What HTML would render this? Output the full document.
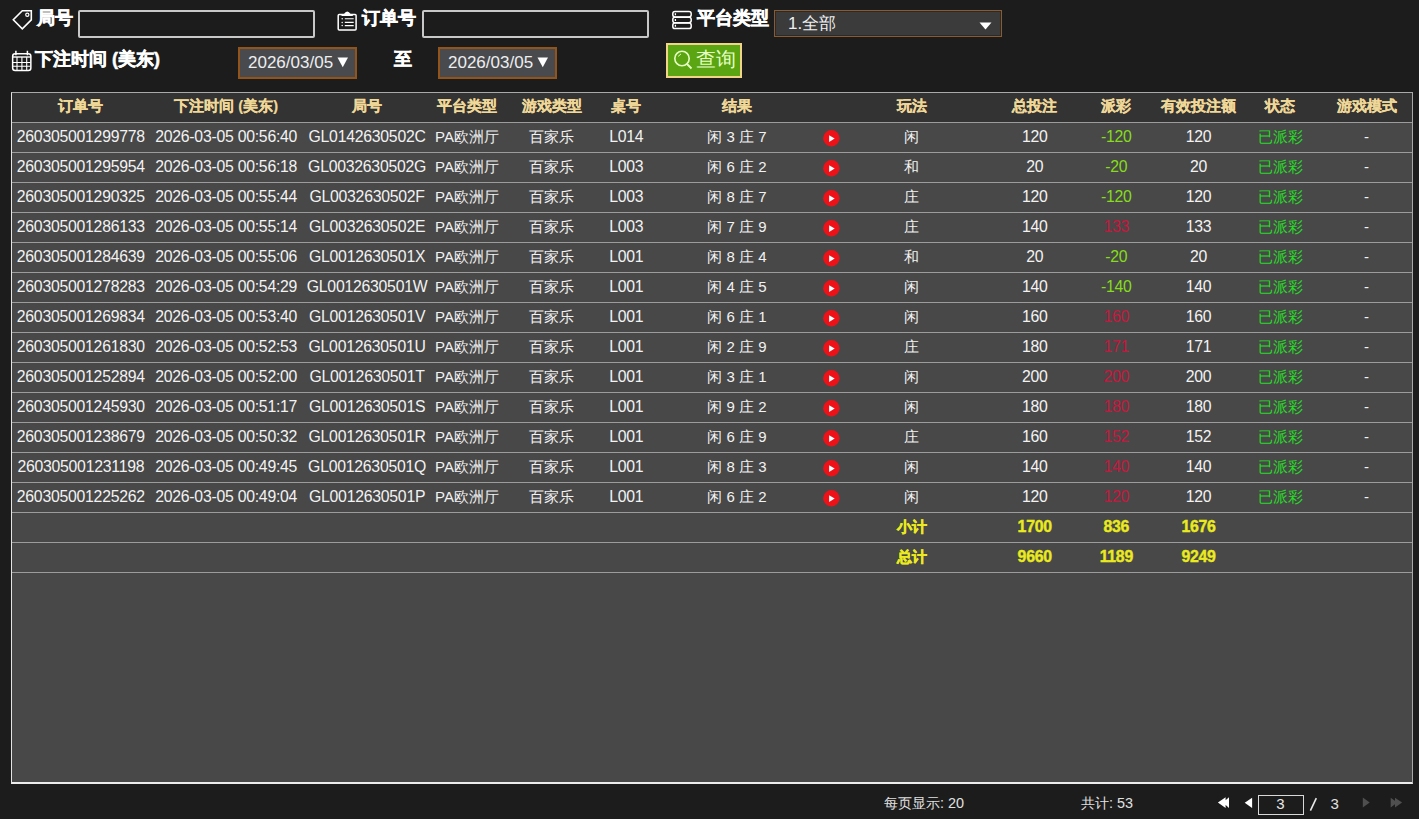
<!DOCTYPE html>
<html><head><meta charset="utf-8">
<style>
html,body{margin:0;padding:0}
body{width:1419px;height:819px;background:#1c1c1c;position:relative;overflow:hidden;font-family:"Liberation Sans",sans-serif;color:#fff}
.abs{position:absolute}
.lbl{position:absolute;font-weight:bold;font-size:18px;line-height:20px;color:#fff;white-space:nowrap;-webkit-text-stroke:0.5px #fff}
.inp{position:absolute;box-sizing:border-box;border:2px solid #c8c8c8;border-radius:2px;background:#1c1c1c}
.sel{position:absolute;box-sizing:border-box;border:1px solid #8a5a30;background:#3b3b3b;box-shadow:inset 0 0 0 1px #2a2a2a}
.date{position:absolute;box-sizing:border-box;border:2px solid #93541c;background:#484a4e;color:#eee;font-size:17px;line-height:27px;white-space:nowrap}
.btn{position:absolute;box-sizing:border-box;border:2px solid #f2d488;background:#5aa511;color:#e6ffc4;font-size:20px;line-height:30px;white-space:nowrap}
#tbl{position:absolute;left:11px;top:92px;width:1402px;height:692px;box-sizing:border-box;background:#484848;border-left:1px solid #e4e4e4;border-bottom:2px solid #ececec;border-top:1px solid #aaa;border-right:1px solid #a8a8a8}
.row{position:absolute;left:12px;width:1400px;height:30px;border-bottom:1px solid #9c9c9c;box-sizing:border-box}
#tbl .row{}
.row i{position:absolute;font-style:normal;width:200px;text-align:center;top:-1px;line-height:29px;font-size:15px;color:#f2f2f2;white-space:nowrap}
.row i.n{font-size:15.8px;letter-spacing:-0.25px;top:-1.5px}
.hd{background:#333;}
.hd i{color:#efd898;font-weight:bold;font-size:14.5px;top:-1.5px;-webkit-text-stroke:0.2px #efd898}
.play{position:absolute;top:7px;width:17px;height:17px;display:block}
.play svg{display:block}
.row i.neg{color:#86dc1a}
.row i.pos{color:#c8163e}
.row i.st{color:#26dc26}
.sum i{color:#eaea1e;font-weight:bold;-webkit-text-stroke:0.4px #eaea1e}
.pg{position:absolute;font-size:14.4px;color:#e0e0e0;white-space:nowrap;line-height:16px}
</style></head><body>
<!-- row 1 -->
<svg class="abs" style="left:11px;top:9px" width="22" height="22" viewBox="0 0 22 22"><path d="M11.3 1.8 H20.3 V10.8 L11.3 19.8 L2.3 10.8 Z" fill="none" stroke="#fff" stroke-width="1.6" stroke-linejoin="miter"/><circle cx="16.3" cy="5.8" r="1.6" fill="none" stroke="#fff" stroke-width="1.2"/></svg>
<div class="lbl" style="left:37px;top:8px">局号</div>
<div class="inp" style="left:78px;top:10px;width:237px;height:28px"></div>
<svg class="abs" style="left:332px;top:6px" width="30" height="28" viewBox="0 0 30 28"><rect x="6.2" y="8.4" width="17.9" height="15.6" rx="1" fill="none" stroke="#fff" stroke-width="1.5"/><path d="M9.5 9.2 H20.8" stroke="#fff" stroke-width="1.6"/><path d="M11.8 8.3 Q15.2 2.6 18.8 8.3 Z" fill="#fff"/><path d="M12.8 12.8 H21.7 M12.8 16.4 H21.7 M12.8 19.6 H21.7" stroke="#fff" stroke-width="1.1"/><circle cx="10.2" cy="12.8" r=".75" fill="#fff"/><circle cx="10.2" cy="16.4" r=".75" fill="#fff"/><circle cx="10.2" cy="19.6" r=".75" fill="#fff"/></svg>
<div class="lbl" style="left:362px;top:8px">订单号</div>
<div class="inp" style="left:422px;top:10px;width:227px;height:28px"></div>
<svg class="abs" style="left:671px;top:10px" width="22" height="21" viewBox="0 0 22 21"><rect x="1.8" y="1.5" width="18.4" height="5.5" rx="2.2" fill="none" stroke="#fff" stroke-width="1.5"/><rect x="1.8" y="7.3" width="18.4" height="5.5" rx="2.2" fill="none" stroke="#fff" stroke-width="1.5"/><rect x="1.8" y="13.1" width="18.4" height="5.5" rx="2.2" fill="none" stroke="#fff" stroke-width="1.5"/><path d="M4.4 3.2 V5.2 M4.4 9 V11 M4.4 14.8 V16.8" stroke="#fff" stroke-width="1.3"/></svg>
<div class="lbl" style="left:697px;top:8px">平台类型</div>
<div class="sel" style="left:774px;top:10px;width:228px;height:27px"><span class="abs" style="left:13px;top:3px;font-size:17px;line-height:20px;color:#f0f0f0">1.全部</span><svg class="abs" style="left:204px;top:11px" width="13" height="8" viewBox="0 0 13 8"><path d="M0.5 0.5 H12.5 L6.5 7.5 Z" fill="#fff"/></svg></div>
<!-- row 2 -->
<svg class="abs" style="left:6px;top:46px" width="30" height="30" viewBox="0 0 30 30"><rect x="6.65" y="7.75" width="18.2" height="16.8" rx="2.5" fill="none" stroke="#fff" stroke-width="1.5"/><path d="M9.9 4.8 V9.2 M21.4 4.8 V9.2" stroke="#fff" stroke-width="1.5"/><path d="M6.6 11 H24.9" stroke="#fff" stroke-width="1.4"/><path d="M7 16.5 H24.4 M7 20.3 H24.4 M11 11 V24 M15.9 11 V24 M20.7 11 V24" stroke="#fff" stroke-width="1.1"/></svg>
<div class="lbl" style="left:35px;top:49px">下注时间 (美东)</div>
<div class="date" style="left:238px;top:47px;width:119px;height:32px;padding-left:8px">2026/03/05<svg class="abs" style="left:97px;top:8px" width="12" height="11" viewBox="0 0 12 11"><path d="M0.5 0.5 H11 L5.75 10.2 Z" fill="#fff"/></svg></div>
<div class="lbl" style="left:394px;top:49px">至</div>
<div class="date" style="left:438px;top:47px;width:119px;height:32px;padding-left:8px">2026/03/05<svg class="abs" style="left:97px;top:8px" width="12" height="11" viewBox="0 0 12 11"><path d="M0.5 0.5 H11 L5.75 10.2 Z" fill="#fff"/></svg></div>
<div class="btn" style="left:666px;top:43px;width:76px;height:35px"><svg class="abs" style="left:5px;top:4px" width="20" height="22" viewBox="0 0 20 22"><circle cx="9" cy="9.5" r="7.2" fill="none" stroke="#e6ffc4" stroke-width="1.6"/><path d="M14 15 L18.5 19.5" stroke="#e6ffc4" stroke-width="1.8"/><path d="M5.5 7.5 A4.5 4.5 0 0 1 8 5" fill="none" stroke="#e6ffc4" stroke-width="1"/></svg><span class="abs" style="left:28px;top:-1px">查询</span></div>
<!-- table -->
<div id="tbl"></div>
<div class="row hd" style="top:93px"><i style="left:-31.2px">订单号</i><i style="left:114.2px">下注时间 (美东)</i><i style="left:255.1px">局号</i><i style="left:355.0px">平台类型</i><i style="left:439.8px">游戏类型</i><i style="left:514.3px">桌号</i><i style="left:625.0px">结果</i><i style="left:799.7px">玩法</i><i style="left:922.7px">总投注</i><i style="left:1004.3px">派彩</i><i style="left:1086.5px">有效投注额</i><i style="left:1168.0px">状态</i><i style="left:1254.5px">游戏模式</i></div>
<div class="row" style="top:123px"><i class="n" style="left:-31.2px">260305001299778</i><i class="n" style="left:114.2px">2026-03-05 00:56:40</i><i class="n" style="left:255.1px">GL0142630502C</i><i class="" style="left:355.0px">PA欧洲厅</i><i class="" style="left:439.8px">百家乐</i><i class="n" style="left:514.3px">L014</i><i class="" style="left:625.0px">闲 3 庄 7</i><b class="play" style="left:810.5px"><svg width="17" height="17" viewBox="0 0 17 17"><circle cx="8.4" cy="8.3" r="8.2" fill="#ee1218"/><path d="M6.1 5.2 L11.7 8.6 L6.1 12.1 Z" fill="#fff"/></svg></b><i class="" style="left:799.7px">闲</i><i class="n" style="left:922.7px">120</i><i class="neg n" style="left:1004.3px">-120</i><i class="n" style="left:1086.5px">120</i><i class="st" style="left:1168.0px">已派彩</i><i class="" style="left:1254.5px">-</i></div>
<div class="row" style="top:153px"><i class="n" style="left:-31.2px">260305001295954</i><i class="n" style="left:114.2px">2026-03-05 00:56:18</i><i class="n" style="left:255.1px">GL0032630502G</i><i class="" style="left:355.0px">PA欧洲厅</i><i class="" style="left:439.8px">百家乐</i><i class="n" style="left:514.3px">L003</i><i class="" style="left:625.0px">闲 6 庄 2</i><b class="play" style="left:810.5px"><svg width="17" height="17" viewBox="0 0 17 17"><circle cx="8.4" cy="8.3" r="8.2" fill="#ee1218"/><path d="M6.1 5.2 L11.7 8.6 L6.1 12.1 Z" fill="#fff"/></svg></b><i class="" style="left:799.7px">和</i><i class="n" style="left:922.7px">20</i><i class="neg n" style="left:1004.3px">-20</i><i class="n" style="left:1086.5px">20</i><i class="st" style="left:1168.0px">已派彩</i><i class="" style="left:1254.5px">-</i></div>
<div class="row" style="top:183px"><i class="n" style="left:-31.2px">260305001290325</i><i class="n" style="left:114.2px">2026-03-05 00:55:44</i><i class="n" style="left:255.1px">GL0032630502F</i><i class="" style="left:355.0px">PA欧洲厅</i><i class="" style="left:439.8px">百家乐</i><i class="n" style="left:514.3px">L003</i><i class="" style="left:625.0px">闲 8 庄 7</i><b class="play" style="left:810.5px"><svg width="17" height="17" viewBox="0 0 17 17"><circle cx="8.4" cy="8.3" r="8.2" fill="#ee1218"/><path d="M6.1 5.2 L11.7 8.6 L6.1 12.1 Z" fill="#fff"/></svg></b><i class="" style="left:799.7px">庄</i><i class="n" style="left:922.7px">120</i><i class="neg n" style="left:1004.3px">-120</i><i class="n" style="left:1086.5px">120</i><i class="st" style="left:1168.0px">已派彩</i><i class="" style="left:1254.5px">-</i></div>
<div class="row" style="top:213px"><i class="n" style="left:-31.2px">260305001286133</i><i class="n" style="left:114.2px">2026-03-05 00:55:14</i><i class="n" style="left:255.1px">GL0032630502E</i><i class="" style="left:355.0px">PA欧洲厅</i><i class="" style="left:439.8px">百家乐</i><i class="n" style="left:514.3px">L003</i><i class="" style="left:625.0px">闲 7 庄 9</i><b class="play" style="left:810.5px"><svg width="17" height="17" viewBox="0 0 17 17"><circle cx="8.4" cy="8.3" r="8.2" fill="#ee1218"/><path d="M6.1 5.2 L11.7 8.6 L6.1 12.1 Z" fill="#fff"/></svg></b><i class="" style="left:799.7px">庄</i><i class="n" style="left:922.7px">140</i><i class="pos n" style="left:1004.3px">133</i><i class="n" style="left:1086.5px">133</i><i class="st" style="left:1168.0px">已派彩</i><i class="" style="left:1254.5px">-</i></div>
<div class="row" style="top:243px"><i class="n" style="left:-31.2px">260305001284639</i><i class="n" style="left:114.2px">2026-03-05 00:55:06</i><i class="n" style="left:255.1px">GL0012630501X</i><i class="" style="left:355.0px">PA欧洲厅</i><i class="" style="left:439.8px">百家乐</i><i class="n" style="left:514.3px">L001</i><i class="" style="left:625.0px">闲 8 庄 4</i><b class="play" style="left:810.5px"><svg width="17" height="17" viewBox="0 0 17 17"><circle cx="8.4" cy="8.3" r="8.2" fill="#ee1218"/><path d="M6.1 5.2 L11.7 8.6 L6.1 12.1 Z" fill="#fff"/></svg></b><i class="" style="left:799.7px">和</i><i class="n" style="left:922.7px">20</i><i class="neg n" style="left:1004.3px">-20</i><i class="n" style="left:1086.5px">20</i><i class="st" style="left:1168.0px">已派彩</i><i class="" style="left:1254.5px">-</i></div>
<div class="row" style="top:273px"><i class="n" style="left:-31.2px">260305001278283</i><i class="n" style="left:114.2px">2026-03-05 00:54:29</i><i class="n" style="left:255.1px">GL0012630501W</i><i class="" style="left:355.0px">PA欧洲厅</i><i class="" style="left:439.8px">百家乐</i><i class="n" style="left:514.3px">L001</i><i class="" style="left:625.0px">闲 4 庄 5</i><b class="play" style="left:810.5px"><svg width="17" height="17" viewBox="0 0 17 17"><circle cx="8.4" cy="8.3" r="8.2" fill="#ee1218"/><path d="M6.1 5.2 L11.7 8.6 L6.1 12.1 Z" fill="#fff"/></svg></b><i class="" style="left:799.7px">闲</i><i class="n" style="left:922.7px">140</i><i class="neg n" style="left:1004.3px">-140</i><i class="n" style="left:1086.5px">140</i><i class="st" style="left:1168.0px">已派彩</i><i class="" style="left:1254.5px">-</i></div>
<div class="row" style="top:303px"><i class="n" style="left:-31.2px">260305001269834</i><i class="n" style="left:114.2px">2026-03-05 00:53:40</i><i class="n" style="left:255.1px">GL0012630501V</i><i class="" style="left:355.0px">PA欧洲厅</i><i class="" style="left:439.8px">百家乐</i><i class="n" style="left:514.3px">L001</i><i class="" style="left:625.0px">闲 6 庄 1</i><b class="play" style="left:810.5px"><svg width="17" height="17" viewBox="0 0 17 17"><circle cx="8.4" cy="8.3" r="8.2" fill="#ee1218"/><path d="M6.1 5.2 L11.7 8.6 L6.1 12.1 Z" fill="#fff"/></svg></b><i class="" style="left:799.7px">闲</i><i class="n" style="left:922.7px">160</i><i class="pos n" style="left:1004.3px">160</i><i class="n" style="left:1086.5px">160</i><i class="st" style="left:1168.0px">已派彩</i><i class="" style="left:1254.5px">-</i></div>
<div class="row" style="top:333px"><i class="n" style="left:-31.2px">260305001261830</i><i class="n" style="left:114.2px">2026-03-05 00:52:53</i><i class="n" style="left:255.1px">GL0012630501U</i><i class="" style="left:355.0px">PA欧洲厅</i><i class="" style="left:439.8px">百家乐</i><i class="n" style="left:514.3px">L001</i><i class="" style="left:625.0px">闲 2 庄 9</i><b class="play" style="left:810.5px"><svg width="17" height="17" viewBox="0 0 17 17"><circle cx="8.4" cy="8.3" r="8.2" fill="#ee1218"/><path d="M6.1 5.2 L11.7 8.6 L6.1 12.1 Z" fill="#fff"/></svg></b><i class="" style="left:799.7px">庄</i><i class="n" style="left:922.7px">180</i><i class="pos n" style="left:1004.3px">171</i><i class="n" style="left:1086.5px">171</i><i class="st" style="left:1168.0px">已派彩</i><i class="" style="left:1254.5px">-</i></div>
<div class="row" style="top:363px"><i class="n" style="left:-31.2px">260305001252894</i><i class="n" style="left:114.2px">2026-03-05 00:52:00</i><i class="n" style="left:255.1px">GL0012630501T</i><i class="" style="left:355.0px">PA欧洲厅</i><i class="" style="left:439.8px">百家乐</i><i class="n" style="left:514.3px">L001</i><i class="" style="left:625.0px">闲 3 庄 1</i><b class="play" style="left:810.5px"><svg width="17" height="17" viewBox="0 0 17 17"><circle cx="8.4" cy="8.3" r="8.2" fill="#ee1218"/><path d="M6.1 5.2 L11.7 8.6 L6.1 12.1 Z" fill="#fff"/></svg></b><i class="" style="left:799.7px">闲</i><i class="n" style="left:922.7px">200</i><i class="pos n" style="left:1004.3px">200</i><i class="n" style="left:1086.5px">200</i><i class="st" style="left:1168.0px">已派彩</i><i class="" style="left:1254.5px">-</i></div>
<div class="row" style="top:393px"><i class="n" style="left:-31.2px">260305001245930</i><i class="n" style="left:114.2px">2026-03-05 00:51:17</i><i class="n" style="left:255.1px">GL0012630501S</i><i class="" style="left:355.0px">PA欧洲厅</i><i class="" style="left:439.8px">百家乐</i><i class="n" style="left:514.3px">L001</i><i class="" style="left:625.0px">闲 9 庄 2</i><b class="play" style="left:810.5px"><svg width="17" height="17" viewBox="0 0 17 17"><circle cx="8.4" cy="8.3" r="8.2" fill="#ee1218"/><path d="M6.1 5.2 L11.7 8.6 L6.1 12.1 Z" fill="#fff"/></svg></b><i class="" style="left:799.7px">闲</i><i class="n" style="left:922.7px">180</i><i class="pos n" style="left:1004.3px">180</i><i class="n" style="left:1086.5px">180</i><i class="st" style="left:1168.0px">已派彩</i><i class="" style="left:1254.5px">-</i></div>
<div class="row" style="top:423px"><i class="n" style="left:-31.2px">260305001238679</i><i class="n" style="left:114.2px">2026-03-05 00:50:32</i><i class="n" style="left:255.1px">GL0012630501R</i><i class="" style="left:355.0px">PA欧洲厅</i><i class="" style="left:439.8px">百家乐</i><i class="n" style="left:514.3px">L001</i><i class="" style="left:625.0px">闲 6 庄 9</i><b class="play" style="left:810.5px"><svg width="17" height="17" viewBox="0 0 17 17"><circle cx="8.4" cy="8.3" r="8.2" fill="#ee1218"/><path d="M6.1 5.2 L11.7 8.6 L6.1 12.1 Z" fill="#fff"/></svg></b><i class="" style="left:799.7px">庄</i><i class="n" style="left:922.7px">160</i><i class="pos n" style="left:1004.3px">152</i><i class="n" style="left:1086.5px">152</i><i class="st" style="left:1168.0px">已派彩</i><i class="" style="left:1254.5px">-</i></div>
<div class="row" style="top:453px"><i class="n" style="left:-31.2px">260305001231198</i><i class="n" style="left:114.2px">2026-03-05 00:49:45</i><i class="n" style="left:255.1px">GL0012630501Q</i><i class="" style="left:355.0px">PA欧洲厅</i><i class="" style="left:439.8px">百家乐</i><i class="n" style="left:514.3px">L001</i><i class="" style="left:625.0px">闲 8 庄 3</i><b class="play" style="left:810.5px"><svg width="17" height="17" viewBox="0 0 17 17"><circle cx="8.4" cy="8.3" r="8.2" fill="#ee1218"/><path d="M6.1 5.2 L11.7 8.6 L6.1 12.1 Z" fill="#fff"/></svg></b><i class="" style="left:799.7px">闲</i><i class="n" style="left:922.7px">140</i><i class="pos n" style="left:1004.3px">140</i><i class="n" style="left:1086.5px">140</i><i class="st" style="left:1168.0px">已派彩</i><i class="" style="left:1254.5px">-</i></div>
<div class="row" style="top:483px"><i class="n" style="left:-31.2px">260305001225262</i><i class="n" style="left:114.2px">2026-03-05 00:49:04</i><i class="n" style="left:255.1px">GL0012630501P</i><i class="" style="left:355.0px">PA欧洲厅</i><i class="" style="left:439.8px">百家乐</i><i class="n" style="left:514.3px">L001</i><i class="" style="left:625.0px">闲 6 庄 2</i><b class="play" style="left:810.5px"><svg width="17" height="17" viewBox="0 0 17 17"><circle cx="8.4" cy="8.3" r="8.2" fill="#ee1218"/><path d="M6.1 5.2 L11.7 8.6 L6.1 12.1 Z" fill="#fff"/></svg></b><i class="" style="left:799.7px">闲</i><i class="n" style="left:922.7px">120</i><i class="pos n" style="left:1004.3px">120</i><i class="n" style="left:1086.5px">120</i><i class="st" style="left:1168.0px">已派彩</i><i class="" style="left:1254.5px">-</i></div>
<div class="row sum" style="top:513px"><i class="" style="left:799.7px">小计</i><i class="n" style="left:922.7px">1700</i><i class="n" style="left:1004.3px">836</i><i class="n" style="left:1086.5px">1676</i></div>
<div class="row sum" style="top:543px"><i class="" style="left:799.7px">总计</i><i class="n" style="left:922.7px">9660</i><i class="n" style="left:1004.3px">1189</i><i class="n" style="left:1086.5px">9249</i></div>
<!-- pagination -->
<div class="pg" style="left:884px;top:795px">每页显示: 20</div>
<div class="pg" style="left:1081px;top:795px">共计: 53</div>
<svg class="abs" style="left:1216px;top:796px" width="15" height="13" viewBox="0 0 15 13"><path d="M1.9 6.6 L9.6 1.3 V11.9 Z M7 6.6 L13 1.3 V11.9 Z" fill="#fff"/></svg>
<svg class="abs" style="left:1243px;top:796px" width="11" height="13" viewBox="0 0 11 13"><path d="M1.7 6.8 L9.1 1.8 V12 Z" fill="#fff"/></svg>
<div class="abs" style="left:1258px;top:795px;width:46px;height:20px;box-sizing:border-box;border:1px solid #d8d8d8;text-align:center;font-size:15px;line-height:16px;color:#e8e8e8;padding-right:1px">3</div>
<svg class="abs" style="left:1308px;top:796px" width="10" height="16" viewBox="0 0 10 16"><path d="M8.3 2.2 L2.4 14.6" stroke="#e8e8e8" stroke-width="1.6"/></svg>
<div class="pg" style="left:1330.5px;top:795.5px;font-size:15px">3</div>
<svg class="abs" style="left:1361px;top:796px" width="11" height="13" viewBox="0 0 11 13"><path d="M1.8 1.4 L8.7 6.5 L1.8 11.5 Z" fill="#4f4f4f"/></svg>
<svg class="abs" style="left:1389px;top:796px" width="15" height="13" viewBox="0 0 15 13"><path d="M1.7 1.8 L8.2 6.6 L1.7 11.5 Z M6 1.8 L13.1 6.6 L6 11.5 Z" fill="#4f4f4f"/></svg>
</body></html>
